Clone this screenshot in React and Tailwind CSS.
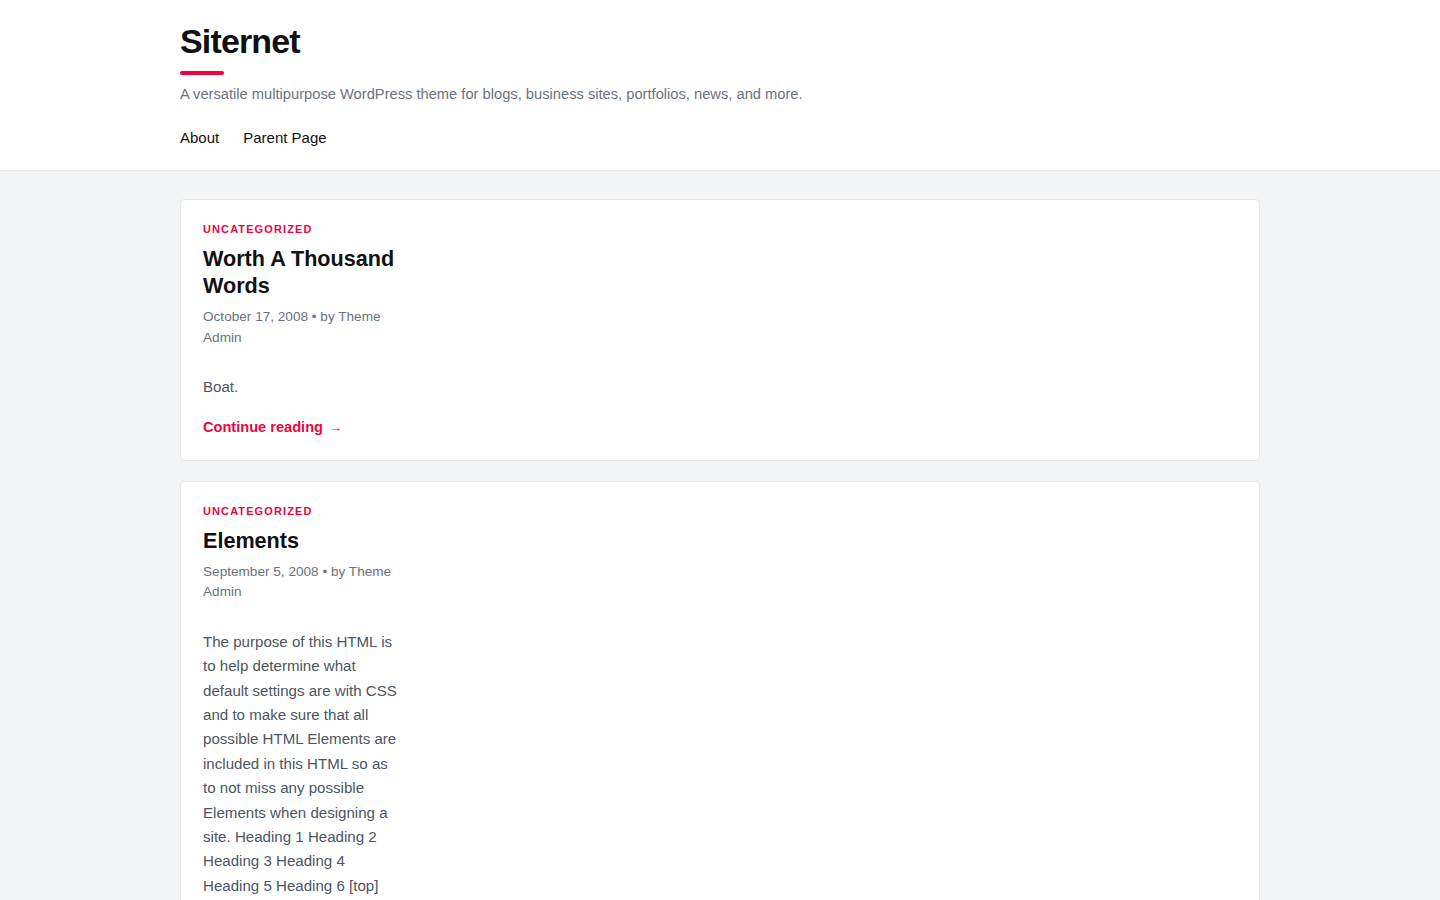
const posts = [
  {
    category: 'Uncategorized',
    title: 'Worth A Thousand Words',
    date: 'October 17, 2008',
    author: 'Theme Admin',
    excerpt: 'Boat.',
    more: true,
  },
  {
    category: 'Uncategorized',
    title: 'Elements',
    date: 'September 5, 2008',
    author: 'Theme Admin',
    excerpt:
      'The purpose of this HTML is to help determine what default settings are with CSS and to make sure that all possible HTML Elements are included in this HTML so as to not miss any possible Elements when designing a site. Heading 1 Heading 2 Heading 3 Heading 4 Heading 5 Heading 6 [top]',
    more: true,
  },
];

const PostCard = ({ post }) => (
  <article className="bg-white border border-[#e5e7eb] rounded-[4px] px-[22px] pt-[21px] pb-[20px]">
    <div className="w-[200px]">
      <a href="#" className="block text-[11px] leading-4 font-bold uppercase tracking-[0.1em] text-[#f0033f]">
        {post.category}
      </a>
      <h2 className="mt-[8px] text-[21.6px] leading-[27px] font-bold text-[#111111]">
        <a href="#">{post.title}</a>
      </h2>
      <p className="mt-[8px] text-[13.6px] leading-[20.6px] text-[#6b7280]">
        {post.date} • by <a href="#">{post.author}</a>
      </p>
      <p className="mt-[27px] text-[15.1px] leading-[24.4px] text-[#4b5563]">{post.excerpt}</p>
      {post.more && (
        <a href="#" className="block mt-[15px] text-[14.6px] leading-6 font-bold text-[#f0033f]">
          Continue reading <span className="ml-[2px] font-normal text-[13px]">→</span>
        </a>
      )}
    </div>
  </article>
);

export default function App() {
  return (
    <div className="min-h-screen bg-[#f3f4f6] font-['Liberation_Sans',Arial,sans-serif]">
      <header className="bg-white border-b border-[#e5e7eb]">
        <div className="w-[1080px] mx-auto pt-[21px] pb-[21px]">
          <h1 className="text-[34px] leading-[41px] font-bold tracking-tight text-[#111111]">
            <a href="#">Siternet</a>
          </h1>
          <div className="mt-[9px] w-[44px] h-[4px] rounded-full bg-[#f0033f]" />
          <p className="mt-[8px] text-[14.7px] leading-[22px] text-[#6b7280]">
            A versatile multipurpose WordPress theme for blogs, business sites, portfolios, news, and more.
          </p>
          <nav className="mt-[22px] flex gap-6 text-[15px] leading-[22px] text-[#111111]">
            <a href="#">About</a>
            <a href="#">Parent Page</a>
          </nav>
        </div>
      </header>
      <main className="w-[1080px] mx-auto pt-[28px] pb-10 flex flex-col gap-[20px]">
        {posts.map((p) => (
          <PostCard key={p.title} post={p} />
        ))}
      </main>
    </div>
  );
}
